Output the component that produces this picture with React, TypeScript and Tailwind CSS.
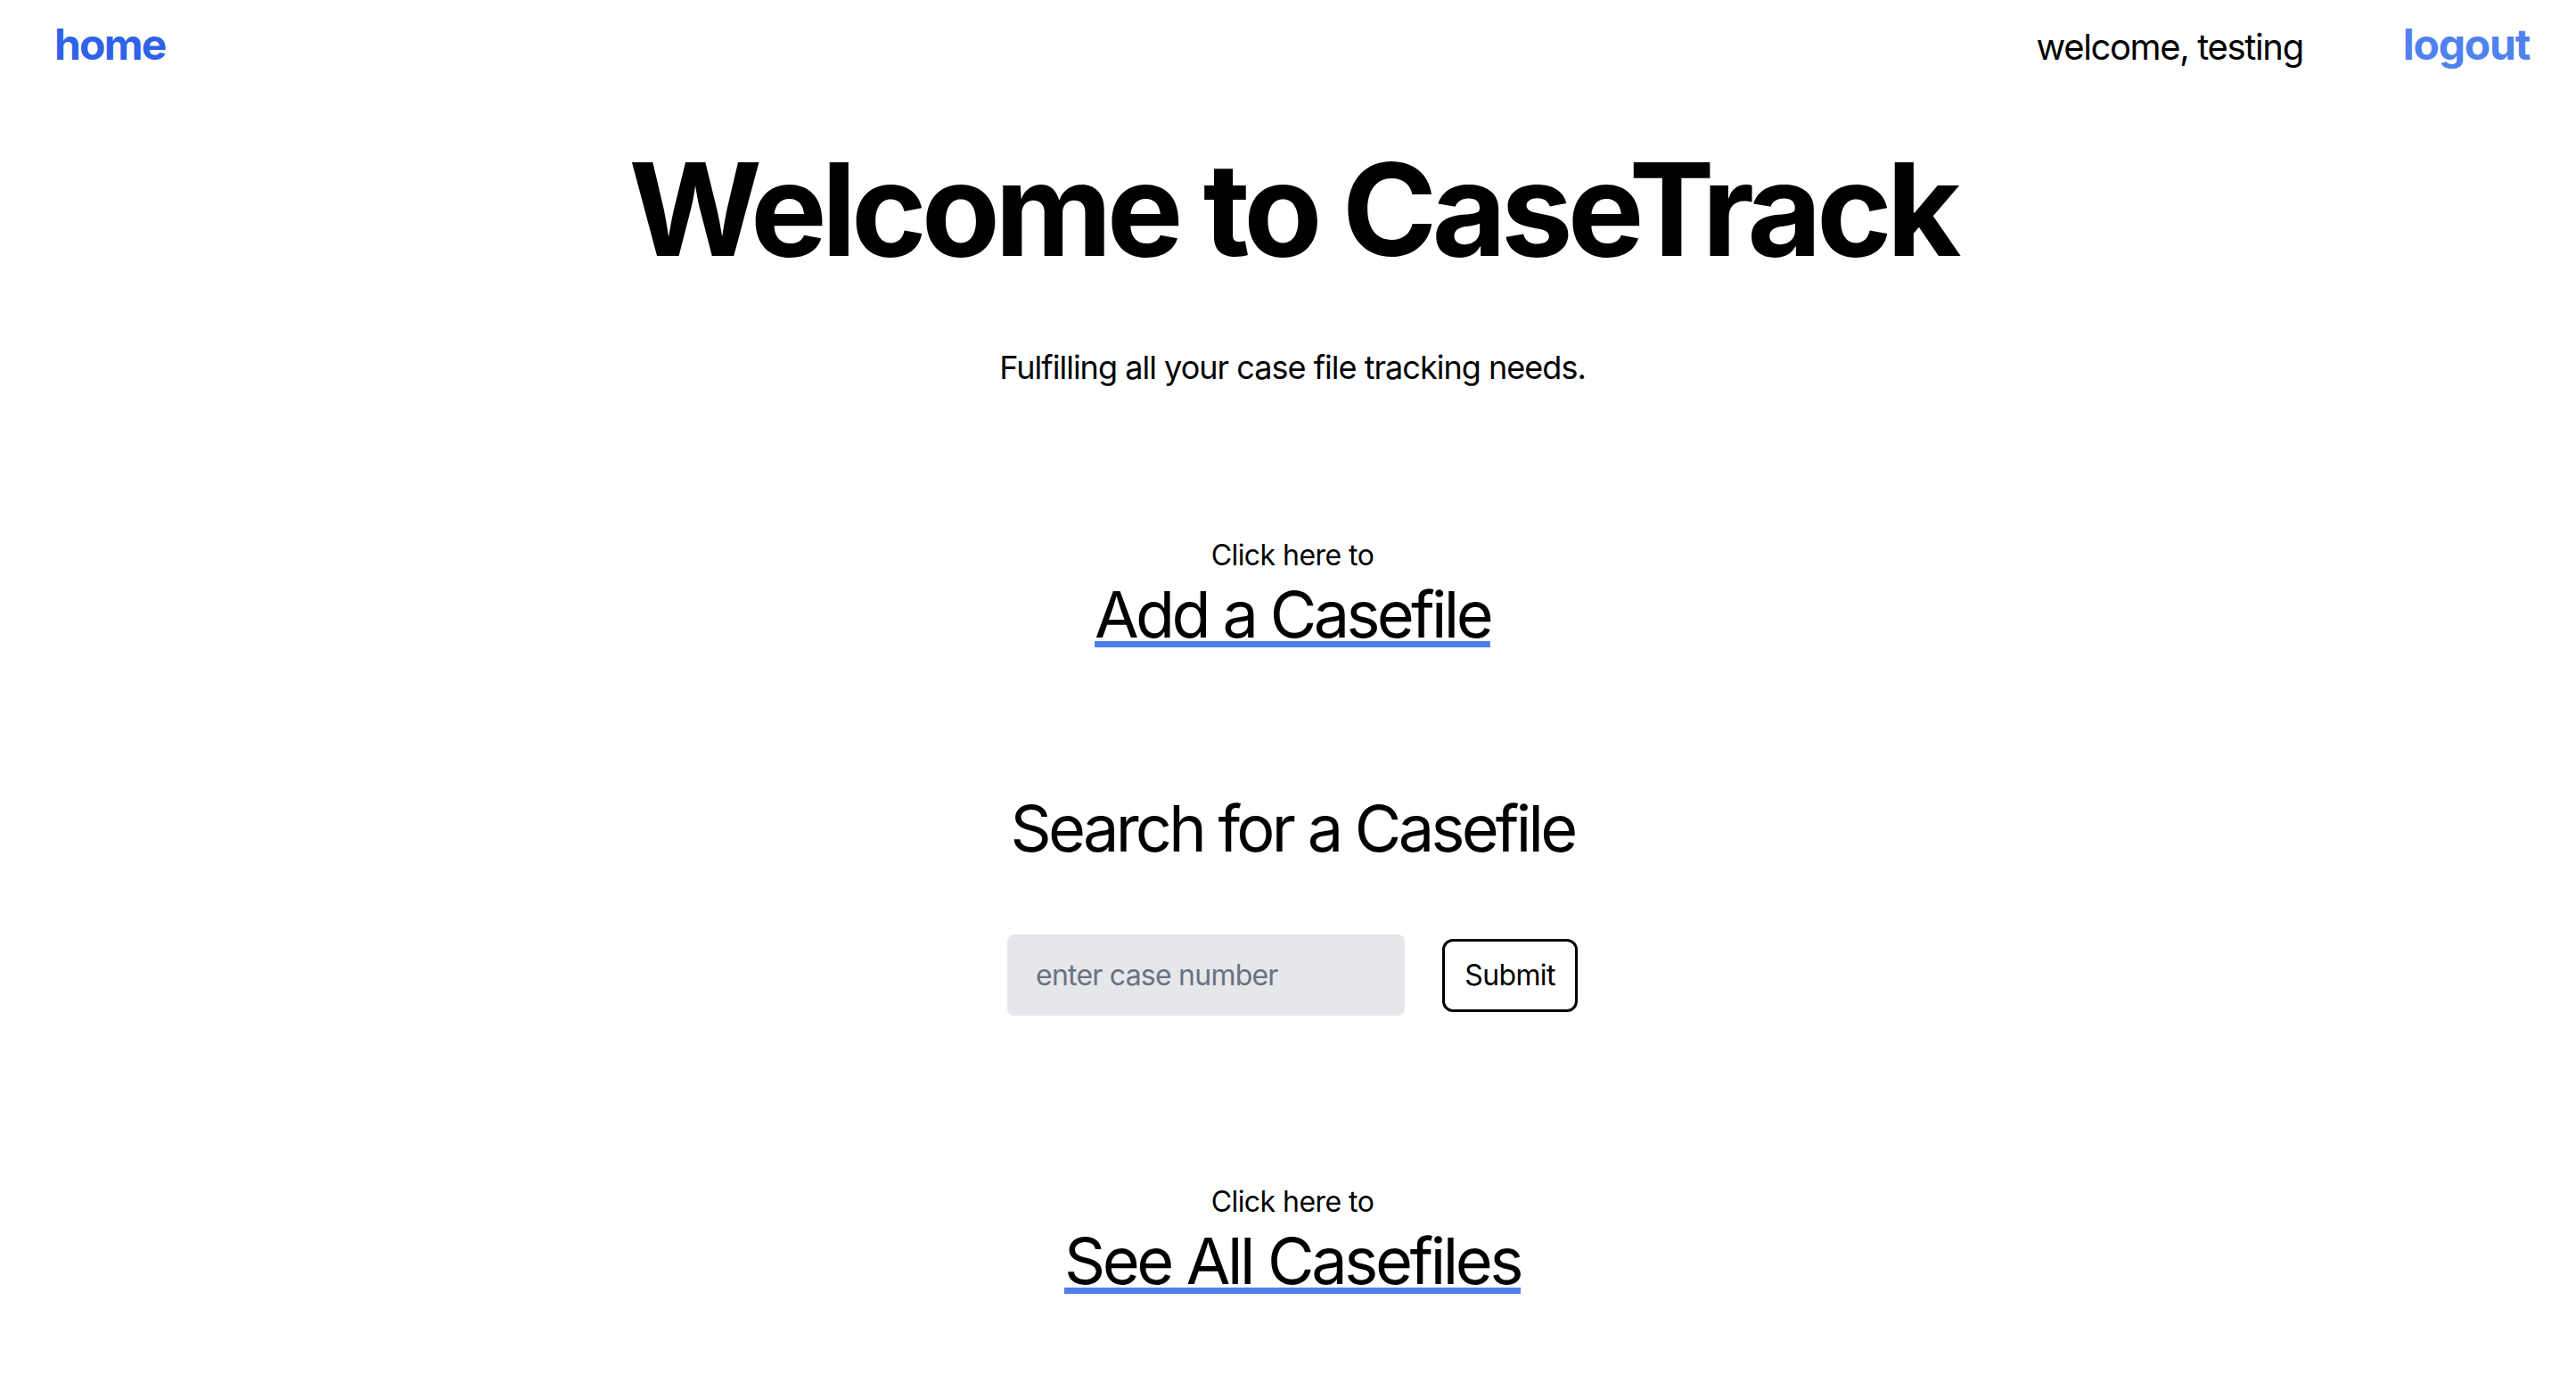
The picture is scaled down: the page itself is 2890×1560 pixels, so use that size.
import React from 'react';

function LinkBlock({ label, tracking }: { label: string; tracking: string }) {
  return (
    <div className="flex flex-col items-center">
      <p className="text-[32px] leading-none tracking-[-0.017em]">Click here to</p>
      <a
        href="#"
        className={`mt-[14px] text-[72px] leading-none underline decoration-[#4f7fee] decoration-[7px] underline-offset-[4px] ${tracking}`}
      >
        {label}
      </a>
    </div>
  );
}

export default function App() {
  return (
    <div className="min-h-[1560px] bg-white text-black" style={{ fontFamily: 'Inter, "Liberation Sans", sans-serif' }}>
      <nav className="flex items-baseline justify-between pl-[61px] pr-[52px] pt-[26px]">
        <a href="#" className="text-[48px] font-bold leading-none tracking-[-0.038em] text-[#2f62e9]">
          home
        </a>
        <div className="flex items-baseline gap-[112px]">
          <span className="text-[40px] leading-none tracking-[-0.034em]">welcome, testing</span>
          <a href="#" className="text-[48px] font-bold leading-none tracking-[-0.026em] text-[#4f82ee]">
            logout
          </a>
        </div>
      </nav>

      <main className="flex flex-col items-center pl-[10px] text-center">
        <h1 className="mt-[89px] text-[144px] font-bold leading-none tracking-[-0.041em]">Welcome to CaseTrack</h1>
        <p className="mt-[87px] text-[36px] leading-none tracking-[-0.027em]">
          Fulfilling all your case file tracking needs.
        </p>

        <div className="mt-[177px]">
          <LinkBlock label="Add a Casefile" tracking="tracking-[-0.051em]" />
        </div>

        <h2 className="mt-[168px] text-[72px] leading-none tracking-[-0.052em]">Search for a Casefile</h2>

        <form className="mt-[83px] flex items-center gap-[42px]" onSubmit={(e) => e.preventDefault()}>
          <input
            type="text"
            placeholder="enter case number"
            className="h-[91px] w-[446px] rounded-[8px] bg-[#e5e7eb] px-[32px] text-[32px] tracking-[-0.024em] outline-none placeholder:text-[#6b7280]"
          />
          <button
            type="submit"
            className="h-[82px] w-[152px] rounded-[12px] border-[3px] border-black text-[32px] tracking-[-0.02em]"
          >
            Submit
          </button>
        </form>

        <div className="mt-[193px]">
          <LinkBlock label="See All Casefiles" tracking="tracking-[-0.047em]" />
        </div>
      </main>
    </div>
  );
}
